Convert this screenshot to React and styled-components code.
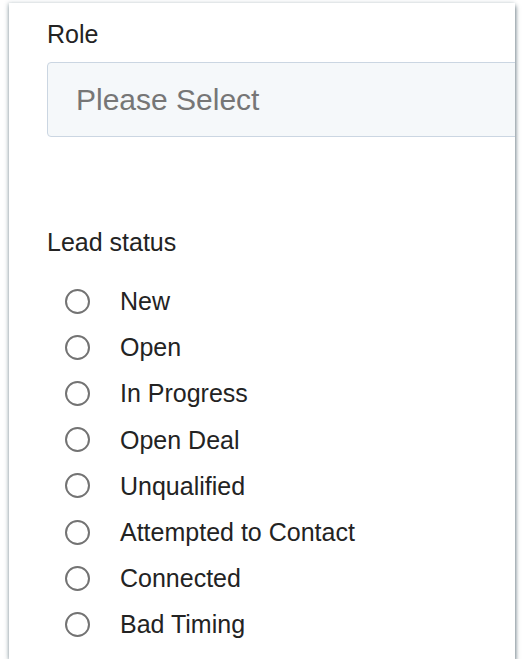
import styled, { createGlobalStyle } from 'styled-components';
import React, { useState } from 'react';

const statuses = [
    "New",
    "Open",
    "In Progress",
    "Open Deal",
    "Unqualified",
    "Attempted to Contact",
    "Connected",
    "Bad Timing",
];

function App() {
    const [status, setStatus] = useState("");

    return (
        <>
            <GlobalStyle />
            <Card>
                <FieldLabel>Role</FieldLabel>
                <SelectBox>Please Select</SelectBox>

                <StatusLabel>Lead status</StatusLabel>
                <RadioList>
                    {statuses.map((s) => (
                        <RadioRow key={s} onClick={() => setStatus(s)}>
                            <RadioCircle checked={status === s} />
                            <RadioText>{s}</RadioText>
                        </RadioRow>
                    ))}
                </RadioList>
            </Card>
        </>
    )
}

const GlobalStyle = createGlobalStyle`
    body {
        margin: 0;
        background: #ffffff;
        font-family: 'Liberation Sans', Arial, sans-serif;
    }
`

const Card = styled.div`
    margin: 3px 0 0 9px;
    width: 506px;
    height: 656px;
    box-sizing: border-box;
    padding: 16px 0 0 38px;
    background: #ffffff;
    overflow: hidden;
    box-shadow: 1px 3px 4px rgba(60, 80, 90, 0.65), -1px 0 4px rgba(120, 140, 150, 0.4);
`

const FieldLabel = styled.div`
    font-size: 25px;
    line-height: 30px;
    color: #232323;
`

const SelectBox = styled.div`
    margin-top: 13px;
    height: 75px;
    width: 520px;
    box-sizing: border-box;
    display: flex;
    align-items: center;
    padding-left: 28px;
    background: #f5f8fa;
    border: 1px solid #cbd6e2;
    border-radius: 4px;
    font-size: 30px;
    color: #767676;
`

const StatusLabel = styled.div`
    margin-top: 90px;
    font-size: 25px;
    line-height: 30px;
    color: #232323;
`

const RadioList = styled.div`
    margin-top: 21px;
    display: flex;
    flex-direction: column;
`

const RadioRow = styled.label`
    height: 46.2px;
    display: flex;
    align-items: center;
    padding-left: 18px;
    cursor: pointer;
`

const RadioCircle = styled.span`
    width: 25px;
    height: 25px;
    box-sizing: border-box;
    border-radius: 50%;
    border: 2px solid #737373;
    background: ${(p) => (p.checked ? 'radial-gradient(#425b76 40%, #fff 45%)' : '#fff')};
    flex-shrink: 0;
`

const RadioText = styled.span`
    margin-left: 30px;
    font-size: 25px;
    line-height: 30px;
    color: #232323;
`

export default App;
